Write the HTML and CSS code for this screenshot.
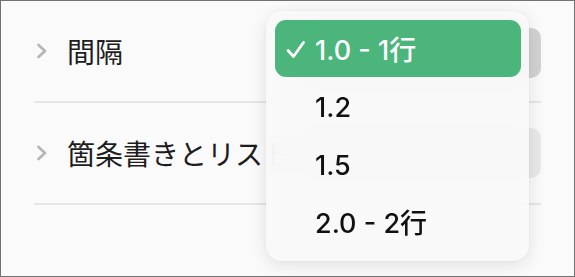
FILE: index.html
```html
<!DOCTYPE html>
<html lang="ja">
<head>
<meta charset="utf-8">
<link rel="stylesheet" href="styles.css">
</head>
<body>
<div class="frame">
  <ul class="list">
    <li class="row">
      <svg class="chev" width="12" height="16" viewBox="0 0 12 16"><path d="M2.5 2 L9 8 L2.5 14" fill="none" stroke="#b4b4b4" stroke-width="2.6" stroke-linecap="round" stroke-linejoin="round"/></svg>
      <span class="label">間隔</span>
      <div class="control active"></div>
    </li>
    <li class="row">
      <svg class="chev" width="12" height="16" viewBox="0 0 12 16"><path d="M2.5 2 L9 8 L2.5 14" fill="none" stroke="#b4b4b4" stroke-width="2.6" stroke-linecap="round" stroke-linejoin="round"/></svg>
      <span class="label">箇条書きとリスト</span>
      <div class="control"></div>
    </li>
  </ul>
  <div class="menu">
    <div class="item selected">
      <svg class="check" width="20" height="20" viewBox="0 0 20 20"><path d="M2 10.5 L7.5 16.5 L17.5 2.5" fill="none" stroke="#fff" stroke-width="2.8" stroke-linecap="round" stroke-linejoin="round"/></svg>
      <span>1.0 - 1行</span>
    </div>
    <div class="item"><span>1.2</span></div>
    <div class="item"><span>1.5</span></div>
    <div class="item"><span>2.0 - 2行</span></div>
  </div>
</div>
</body>
</html>
```

FILE: styles.css
```css
html, body {
  margin: 0;
  padding: 0;
  background: #fafafa;
}
.frame {
  position: relative;
  width: 575px;
  height: 277px;
  box-sizing: border-box;
  border: 1px solid #727272;
  background: #fafafa;
  overflow: hidden;
  font-family: Inter, "Noto Sans CJK JP", sans-serif;
}
.list {
  list-style: none;
  margin: 0;
  padding: 0 33px 0 33px;
}
.row {
  display: flex;
  align-items: center;
  height: 100px;
  border-bottom: 2px solid #e6e6e6;
}
.chev {
  margin-left: 2px;
  flex: none;
}
.label {
  margin-left: 19px;
  font-family: "Noto Sans CJK JP", sans-serif;
  font-size: 28px;
  line-height: 1;
  color: #1d1d1d;
  white-space: nowrap;
}
.control {
  margin-left: auto;
  width: 240px;
  height: 50px;
  border-radius: 10px;
  background: #e9e9e9;
  flex: none;
}
.control.active {
  background: #d2d2d2;
  margin-top: 4px;
}
.menu {
  position: absolute;
  left: 265px;
  top: 10px;
  width: 263px;
  height: 250px;
  box-sizing: border-box;
  padding: 9px 8px 7px 9px;
  border-radius: 16px;
  background: rgba(249, 249, 249, 0.92);
  backdrop-filter: blur(12px);
  box-shadow: 0 0 0 1px rgba(0, 0, 0, 0.025), 0 4px 18px rgba(0, 0, 0, 0.1);
  display: flex;
  flex-direction: column;
}
.item {
  position: relative;
  height: 58px;
  display: flex;
  align-items: center;
  padding-left: 40px;
  padding-top: 3px;
  box-sizing: border-box;
  font-size: 27px;
  font-weight: 500;
  color: #111;
  line-height: 1;
  white-space: nowrap;
}
.item.selected {
  height: 57px;
  background: #4cb57c;
  border-radius: 11px;
  color: #fff;
}
.check {
  position: absolute;
  left: 11px;
  top: 20px;
}
```
